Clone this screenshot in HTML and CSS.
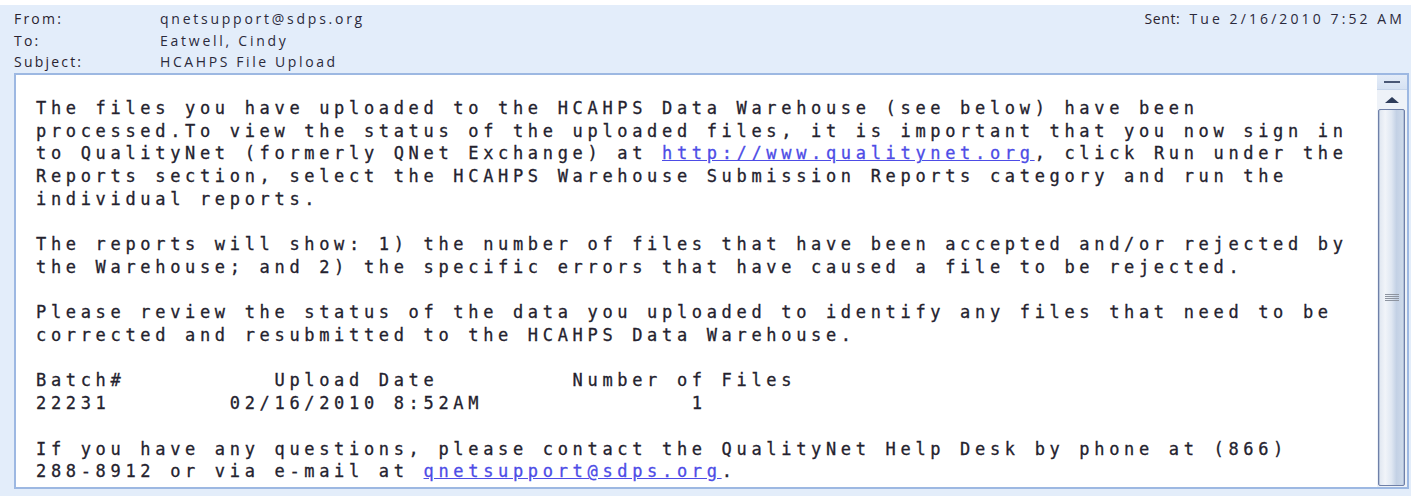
FILE: index.html
```html
<!DOCTYPE html>
<html lang="en">
<head>
<meta charset="utf-8">
<title>HCAHPS File Upload</title>
<link rel="stylesheet" href="styles.css">
</head>
<body>
<div class="message">
  <div class="header">
    <div class="hrow">
      <span class="label">From:</span>
      <span class="value">qnetsupport@sdps.org</span>
      <span class="sent"><span class="sent-label">Sent:</span><span class="value sent-date">Tue 2/16/2010 7:52 AM</span></span>
    </div>
    <div class="hrow">
      <span class="label">To:</span>
      <span class="value">Eatwell, Cindy</span>
    </div>
    <div class="hrow">
      <span class="label">Subject:</span>
      <span class="value subject">HCAHPS File Upload</span>
    </div>
  </div>
  <div class="pane">
    <pre class="content">The files you have uploaded to the HCAHPS Data Warehouse (see below) have been
processed.To view the status of the uploaded files, it is important that you now sign in
to QualityNet (formerly QNet Exchange) at <a href="#">http://www.qualitynet.org</a>, click Run under the
Reports section, select the HCAHPS Warehouse Submission Reports category and run the
individual reports.

The reports will show: 1) the number of files that have been accepted and/or rejected by
the Warehouse; and 2) the specific errors that have caused a file to be rejected.

Please review the status of the data you uploaded to identify any files that need to be
corrected and resubmitted to the HCAHPS Data Warehouse.

Batch#          Upload Date         Number of Files
22231        02/16/2010 8:52AM              1

If you have any questions, please contact the QualityNet Help Desk by phone at (866)
288-8912 or via e-mail at <a href="#">qnetsupport@sdps.org</a>.</pre>
    <div class="scrollbar">
      <div class="sb-top"><span class="sb-dash"></span></div>
      <div class="sb-up"><span class="sb-arrow"></span></div>
      <div class="sb-thumb"><span class="sb-grip"></span></div>
    </div>
  </div>
</div>
</body>
</html>
```
FILE: styles.css
```css
html, body {
  margin: 0;
  padding: 0;
  background: #ffffff;
}

.message {
  margin-top: 5px;
  height: 491px;
  background: #e3edfa;
  display: flex;
  flex-direction: column;
  box-sizing: border-box;
}

/* Message header: From / To / Subject with the sent date on the right */
.header {
  padding: 3px 6px 0 14px;
  height: 68px;
  box-sizing: border-box;
  font-family: "Open Sans", "Noto Sans", sans-serif;
  font-size: 14px;
  color: #2a2330;
}

.hrow {
  display: flex;
  align-items: baseline;
  height: 21.5px;
  line-height: 21.5px;
}

.label {
  width: 146px;
  flex: none;
  letter-spacing: 2.2px;
}

.value {
  letter-spacing: 2.75px;
  color: #2b2a3c;
}

.subject {
  letter-spacing: 2.6px;
}

.sent {
  margin-left: auto;
  display: flex;
  align-items: baseline;
}

.sent-label {
  margin-right: 9px;
  letter-spacing: 0.6px;
}

.sent-date {
  letter-spacing: 3.1px;
}

/* Reading pane */
.pane {
  margin: 0 2px 0 14px;
  height: 416px;
  display: flex;
  border: 2px solid #9db8e2;
  background: #ffffff;
  box-sizing: border-box;
}

.content {
  flex: 1;
  margin: 0;
  padding: 22px 0 0 20px;
  overflow: hidden;
  font-family: "DejaVu Sans Mono", "Liberation Mono", monospace;
  font-size: 17px;
  letter-spacing: 4.67px;
  line-height: 22.7px;
  color: #24222e;
  -webkit-text-stroke: 0.3px currentColor;
}

.content a {
  color: #4d4ce6;
  text-decoration: underline;
}

/* Vertical scrollbar */
.scrollbar {
  width: 30px;
  flex: none;
  display: flex;
  flex-direction: column;
  background: #eef2f8;
}

.sb-top {
  height: 14px;
  display: flex;
  align-items: center;
  justify-content: center;
  background: linear-gradient(#e4ecf8, #d6e2f3);
  border-bottom: 1px solid #c7d5ea;
}

.sb-dash {
  width: 16px;
  height: 2px;
  background: #4a5876;
}

.sb-up {
  height: 19px;
  display: flex;
  align-items: center;
  justify-content: center;
}

.sb-arrow {
  width: 0;
  height: 0;
  border-left: 7px solid transparent;
  border-right: 7px solid transparent;
  border-bottom: 6px solid #2e3c5a;
}

.sb-thumb {
  flex: 1;
  margin: 0 2px 1px 1px;
  border: 1px solid #6f80a8;
  border-radius: 2px;
  background: linear-gradient(to right, #dfe6f0 0%, #f1f4f9 25%, #dfe7f2 50%, #c3d1e5 70%, #cfdbeb 100%);
  box-shadow: inset 1px 0 0 #b9c6db, inset -1px 0 0 #aebdd6;
  display: flex;
  align-items: center;
  justify-content: center;
}

.sb-grip {
  width: 14px;
  height: 7px;
  background: repeating-linear-gradient(#8d94a0 0 1px, transparent 1px 2px);
}
```
